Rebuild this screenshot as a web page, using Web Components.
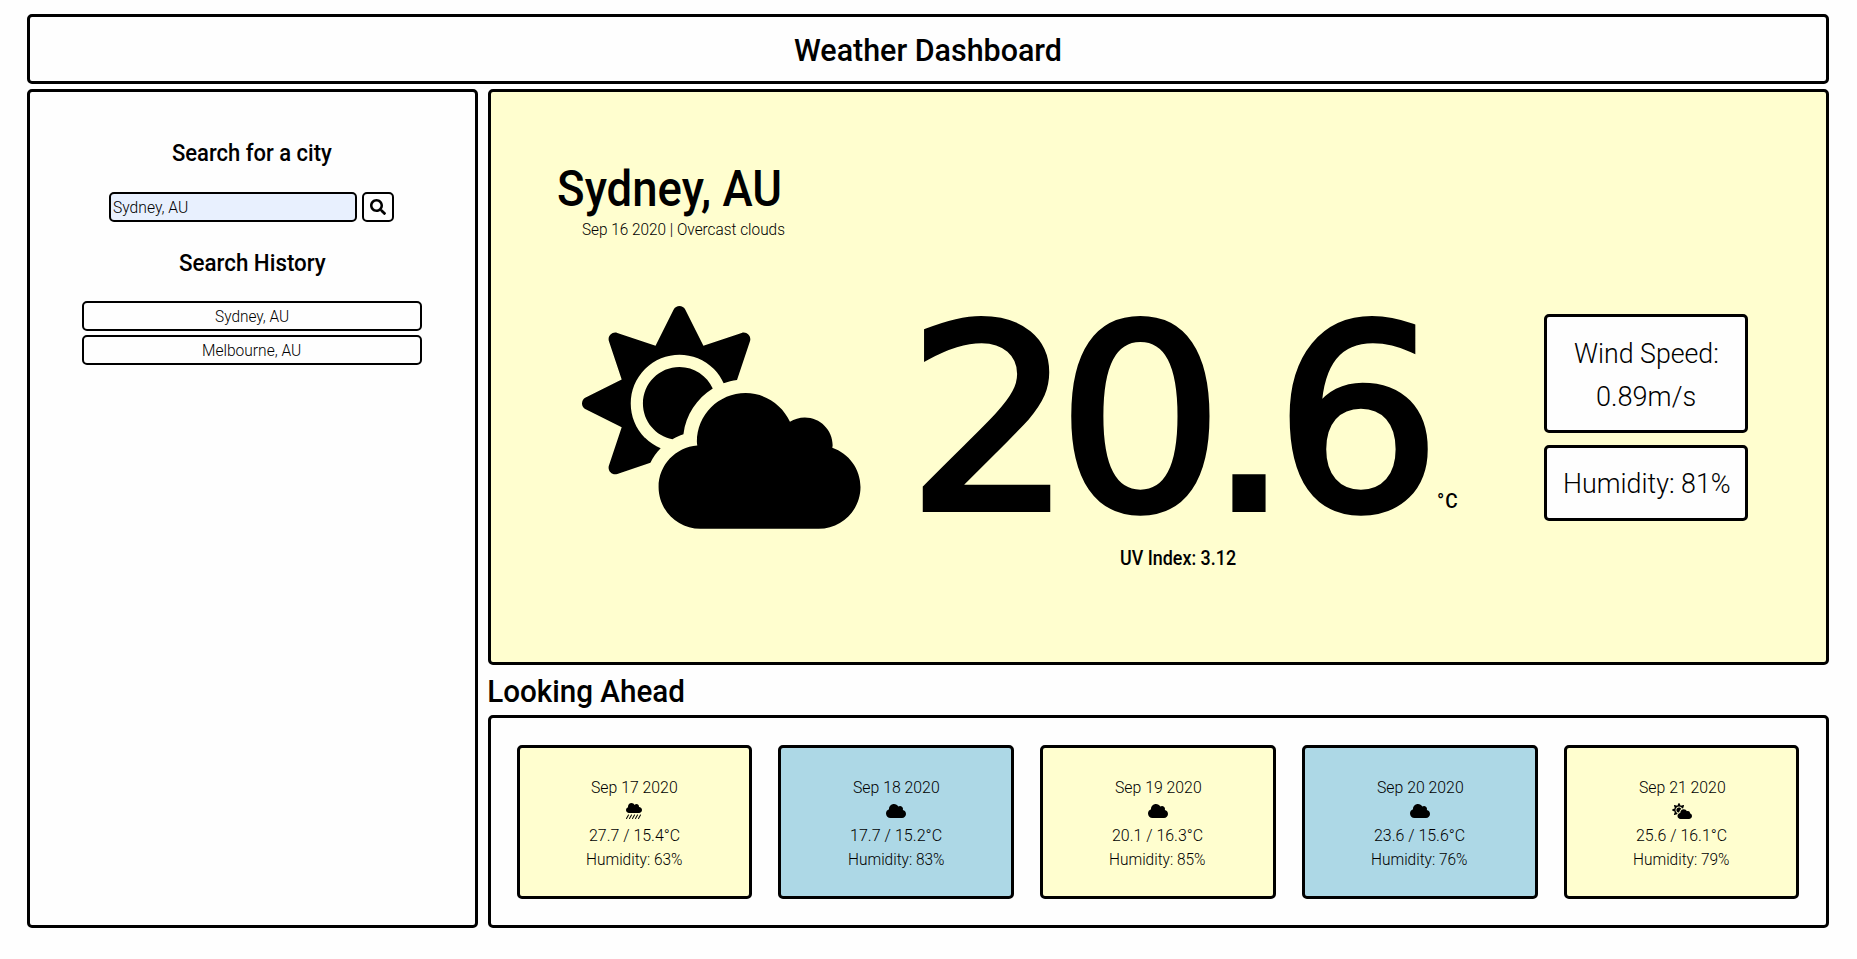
<!DOCTYPE html>
<html lang="en">
<head>
<meta charset="utf-8">
<title>Weather Dashboard</title>
<style>
html,body{margin:0;height:100%;overflow:hidden}
body{background:#fefefe;color:#000;font-family:Roboto,"Liberation Sans",sans-serif;font-weight:300}
</style>
</head>
<body>
<weather-app></weather-app>
<script>
const ICONS = {
  search: [512, 'M505 442.7L405.3 343c-4.5-4.5-10.6-7-17-7H372c27.6-35.3 44-79.7 44-128C416 93.1 322.9 0 208 0S0 93.1 0 208s93.1 208 208 208c48.3 0 92.7-16.4 128-44v16.3c0 6.4 2.5 12.5 7 17l99.7 99.7c9.4 9.4 24.6 9.4 33.9 0l28.3-28.3c9.4-9.4 9.4-24.6.1-34zM208 336c-70.7 0-128-57.2-128-128 0-70.7 57.2-128 128-128 70.7 0 128 57.2 128 128 0 70.7-57.2 128-128 128z'],
  cloud: [640, 'M537.6 226.6c4.1-10.7 6.4-22.4 6.4-34.6 0-53-43-96-96-96-19.7 0-38.1 6-53.3 16.2C367 64.2 315.3 32 256 32c-88.4 0-160 71.6-160 160 0 2.7.1 5.4.2 8.1C40.2 219.8 0 273.2 0 336c0 79.5 64.5 144 144 144h368c70.7 0 128-57.3 128-128 0-61.9-44-113.6-102.4-125.4z'],
  sun: [640, 'M575.2 325.7c.2-1.9.8-3.7.8-5.6 0-35.3-28.7-64-64-64-12.6 0-24.2 3.8-34.1 10-17.6-38.8-56.5-66-101.9-66-61.8 0-112 50.1-112 112 0 3 .7 5.8.9 8.7-49.6 3.7-88.9 44.7-88.9 95.3 0 53 43 96 96 96h272c53 0 96-43 96-96 0-42.1-27.2-77.4-64.8-90.4zm-430.4-22.6c-43.7-43.7-43.7-114.7 0-158.3 43.7-43.7 114.7-43.7 158.4 0 9.7 9.7 16.9 20.9 22.3 32.7 9.8-3.7 20.1-6 30.7-7.5L386 81.1c4-11.9-7.3-23.1-19.2-19.2L279 91.2 237.5 8.4C232-2.8 216-2.8 210.4 8.4L169 91.2 81.1 61.9C69.3 58 58 69.3 61.9 81.1l29.3 87.8-82.8 41.5c-11.2 5.6-11.2 21.5 0 27.1l82.8 41.4-29.3 87.8c-4 11.9 7.3 23.1 19.2 19.2l76.1-25.4c6.1-12.4 14-23.7 23.6-33.5-13.1-5.4-25.4-13.4-36-24zm-4.8-79.2c0 40.8 29.3 74.8 67.9 82.3 8-4.7 16.3-8.8 25.2-11.7 5.4-44.3 31-82.5 67.4-105C287.3 160.4 258 140 224 140c-46.3 0-84 37.6-84 83.9z'],
  rain: [512, [0,96,192,288,384].map(d => `M${87.9+d} 370.1c-7.6-4.4-17.4-1.8-21.8 6l-64 112c-4.4 7.7-1.7 17.5 6 21.8 2.5 1.4 5.2 2.1 7.9 2.1 5.5 0 10.9-2.9 13.9-8.1l64-112c4.4-7.6 1.7-17.4-6-21.8z`).join('') + 'M416 128c-.6 0-1.1.2-1.6.2 1.1-5.2 1.6-10.6 1.6-16.2 0-44.2-35.8-80-80-80-24.6 0-46.3 11.3-61 28.8C256.4 24.8 219.3 0 176 0 114.1 0 64 50.1 64 112c0 7.3.8 14.3 2.1 21.2C27.8 145.8 0 181.5 0 224c0 53 43 96 96 96h320c53 0 96-43 96-96s-43-96-96-96z']
};

class Base extends HTMLElement {
  render(html) {
    if (!this.shadowRoot) this.attachShadow({mode: 'open'});
    this.shadowRoot.innerHTML = html;
  }
}

// One line of text whose inked width is exactly `w` pixels.
// `font`, `ls` (letter spacing) and `stroke` (outline width) are optional.
class FitText extends Base {
  connectedCallback() {
    const a = n => this.getAttribute(n);
    const w = +a('w'), size = +a('s'), h = +a('h'), weight = a('wt') || 300;
    const font = a('font') || 'Roboto', ls = +(a('ls') || 0), st = +(a('stroke') || 0);
    this.render(`<style>
      :host{display:block;flex:none;width:${w}px;height:${h}px}
      span{display:inline-block;white-space:nowrap;transform-origin:0 0;font-family:"${font}","Liberation Sans",sans-serif;font-size:${size}px;line-height:${h}px;font-weight:${weight};letter-spacing:${ls}px;-webkit-text-stroke:${st}px #000;vertical-align:top}
    </style><span><slot></slot></span>`);
    const c = FitText.ctx;
    c.letterSpacing = ls + 'px';
    c.font = `${weight} ${size}px "${font}", "Liberation Sans", sans-serif`;
    const m = c.measureText(this.textContent);
    const left = m.actualBoundingBoxLeft + st / 2, right = m.actualBoundingBoxRight + st / 2;
    const k = w / (left + right);
    this.shadowRoot.querySelector('span').style.transform = `translateX(${left * k}px) scaleX(${k})`;
  }
}
FitText.ctx = document.createElement('canvas').getContext('2d');
customElements.define('fit-text', FitText);

class WeatherIcon extends Base {
  connectedCallback() {
    const [vw, d] = ICONS[this.getAttribute('name')];
    const h = +(this.getAttribute('size') || 16);
    this.render(`<style>:host{display:block;flex:none;width:${h*vw/512}px;height:${h}px}svg{display:block;width:100%;height:100%;overflow:visible}</style>
      <svg viewBox="0 0 ${vw} 512"><path fill="currentColor" d="${d}"/></svg>`);
  }
}
customElements.define('weather-icon', WeatherIcon);

class PanelBox extends Base {
  connectedCallback() {
    this.render(`<style>:host{display:flex;box-sizing:border-box;border:3px solid #000;border-radius:5px;background:var(--fill,#fefefe)}</style><slot></slot>`);
  }
}
customElements.define('panel-box', PanelBox);

class SearchPanel extends Base {
  connectedCallback() {
    this.render(`<style>
      :host{display:block}
      panel-box{height:100%;flex-direction:column;align-items:center;padding:43px 1px 0 0}
      .row{display:flex;gap:5px;margin:21px 1px 23px 0}
      .field,.btn,.item{box-sizing:border-box;border:2px solid #000;border-radius:5px;height:30px;display:flex;align-items:center;padding-top:2px}
      .field{width:248px;background:#e8f0fe;padding-left:2px}
      .btn{width:32px;justify-content:center;padding:0 0 1px}
      .list{display:flex;flex-direction:column;gap:4px;margin-top:20px;width:340px}
      .item{justify-content:center}
    </style>
    <panel-box>
      <fit-text w="160" s="24" h="36" wt="500">Search for a city</fit-text>
      <div class="row"><div class="field"><fit-text w="75" s="15.6" h="24">Sydney, AU</fit-text></div><div class="btn"><weather-icon name="search"></weather-icon></div></div>
      <fit-text w="147" s="24" h="36" wt="500">Search History</fit-text>
      <div class="list">
        <div class="item"><fit-text w="74" s="15.6" h="24">Sydney, AU</fit-text></div>
        <div class="item"><fit-text w="98" s="15.6" h="24">Melbourne, AU</fit-text></div>
      </div>
    </panel-box>`);
  }
}
customElements.define('search-panel', SearchPanel);

class CurrentWeather extends Base {
  connectedCallback() {
    this.render(`<style>
      :host{display:block;--fill:#fffecf}
      .main{height:100%;flex-direction:column;padding-top:68.5px}
      .city{margin-left:67px}.date{margin-left:91px}
      .row{display:flex;align-items:flex-start;padding-left:90.7px}
      .sky{margin-top:64.2px}
      .temp{margin:53.8px 0 0 62.2px}
      .deg{display:flex;gap:10px}
      .unit{margin-top:195px}
      .uv{margin:-1px 0 0 198.5px}
      .facts{display:flex;flex-direction:column;gap:12px;margin:72.5px 0 0 86.5px;width:204px;--fill:#fefefe}
      .facts panel-box{flex-direction:column;align-items:center;justify-content:center;height:76px;padding:1px 0 0 3px}
      .facts panel-box.wind{height:119px;padding:3px 0 0}
    </style>
    <panel-box class="main">
      <fit-text class="city" w="222" s="49.4" h="57" wt="500">Sydney, AU</fit-text>
      <fit-text class="date" w="203" s="15.6" h="24">Sep 16 2020 | Overcast clouds</fit-text>
      <div class="row">
        <weather-icon class="sky" name="sun" size="222.8"></weather-icon>
        <div class="temp">
          <div class="deg"><fit-text w="506" s="256" h="250" wt="400" font="DejaVu Sans" ls="-16" stroke="6">20.6</fit-text><fit-text class="unit" w="19" s="19.5" h="24" wt="500" ls="1">°C</fit-text></div>
          <fit-text class="uv" w="115" s="19.5" h="30" wt="500">UV Index: 3.12</fit-text>
        </div>
        <div class="facts">
          <panel-box class="wind"><fit-text w="144" s="28" h="43">Wind Speed:</fit-text><fit-text w="98" s="28" h="43">0.89m/s</fit-text></panel-box>
          <panel-box><fit-text w="165" s="28" h="43">Humidity: 81%</fit-text></panel-box>
        </div>
      </div>
    </panel-box>`);
  }
}
customElements.define('current-weather', CurrentWeather);

class ForecastCard extends Base {
  connectedCallback() {
    const a = n => this.getAttribute(n);
    this.render(`<style>
      :host{display:block;flex:1;--fill:#fffecf}
      :host([cold]){--fill:#add8e6}
      panel-box{height:100%;flex-direction:column;align-items:center;justify-content:center;padding-top:4px}
      .i{height:21px;padding-top:3px}
    </style>
    <panel-box><fit-text w="86" s="15.6" h="24">${a('date')}</fit-text><div class="i"><weather-icon name="${a('icon')}"></weather-icon></div><fit-text w="91" s="15.6" h="24">${a('temp')}°C</fit-text><fit-text w="95" s="15.6" h="24">Humidity: ${a('hum')}%</fit-text></panel-box>`);
  }
}
customElements.define('forecast-card', ForecastCard);

class WeatherApp extends Base {
  connectedCallback() {
    this.render(`<style>
      :host{display:grid;box-sizing:border-box;width:1857px;height:959px;padding:14px 28px 31px 27px;
        grid-template:70px 839px / 451px 1341px;column-gap:10px;row-gap:5px}
      .head{grid-column:1/3;align-items:center;justify-content:center;padding:1px 1px 0 0}
      .right{display:flex;flex-direction:column}
      current-weather{height:576px}
      .ahead{margin:3px 0 0 1px}
      .cards{height:213px;padding:27px 26.5px 26px 25.5px;gap:26px}
    </style>
    <panel-box class="head"><fit-text w="267" s="32" h="46" wt="500">Weather Dashboard</fit-text></panel-box>
    <search-panel></search-panel>
    <div class="right">
      <current-weather></current-weather>
      <fit-text class="ahead" w="195" s="32" h="47" wt="500">Looking Ahead</fit-text>
      <panel-box class="cards">
        <forecast-card date="Sep 17 2020" icon="rain" temp="27.7 / 15.4" hum="63"></forecast-card>
        <forecast-card cold date="Sep 18 2020" icon="cloud" temp="17.7 / 15.2" hum="83"></forecast-card>
        <forecast-card date="Sep 19 2020" icon="cloud" temp="20.1 / 16.3" hum="85"></forecast-card>
        <forecast-card cold date="Sep 20 2020" icon="cloud" temp="23.6 / 15.6" hum="76"></forecast-card>
        <forecast-card date="Sep 21 2020" icon="sun" temp="25.6 / 16.1" hum="79"></forecast-card>
      </panel-box>
    </div>`);
  }
}
customElements.define('weather-app', WeatherApp);
</script>
</body>
</html>
